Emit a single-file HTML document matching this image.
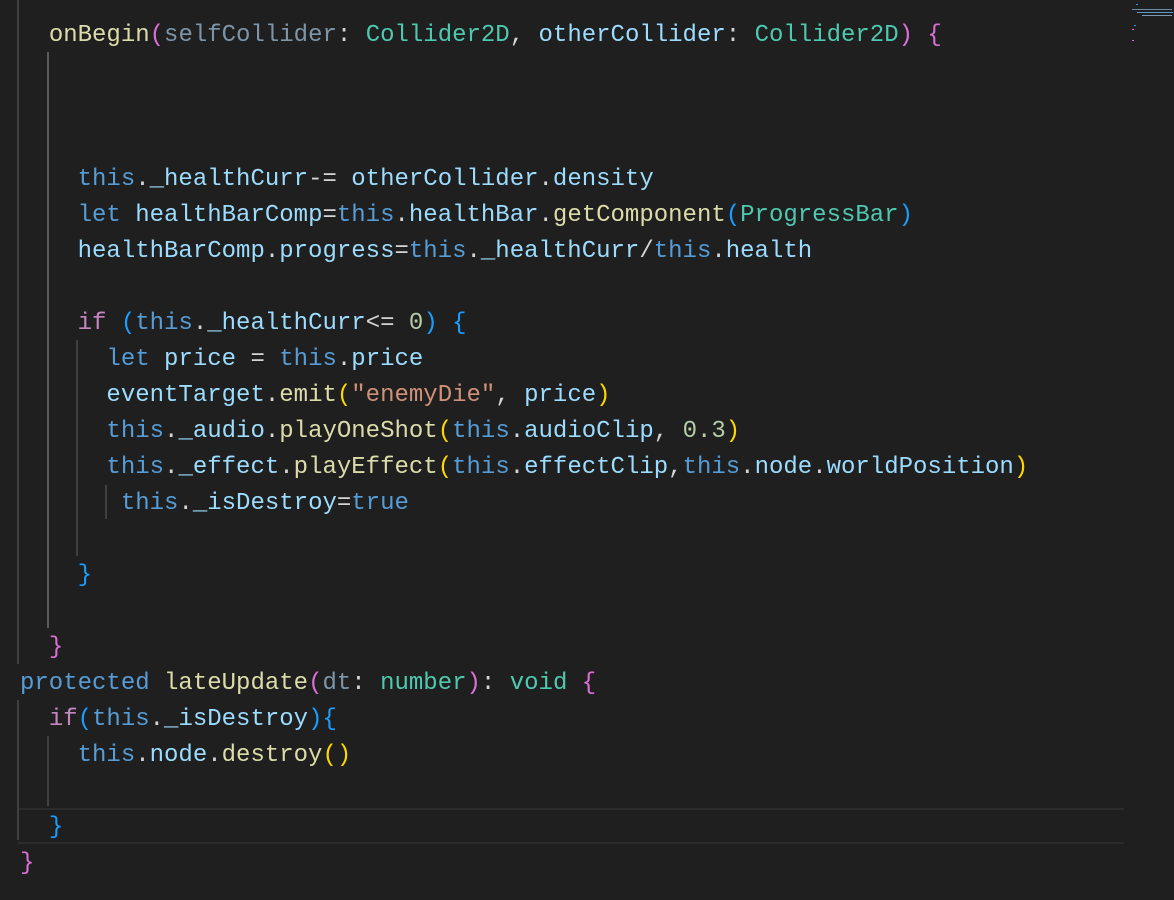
<!DOCTYPE html>
<html><head><meta charset="utf-8"><style>
html,body{margin:0;padding:0;background:#1f1f1f;width:1174px;height:900px;overflow:hidden}
.l{position:absolute;left:20px;height:36px;line-height:36px;font-family:"Liberation Mono","DejaVu Sans Mono",monospace;font-size:24px;white-space:pre;color:#d4d4d4;margin-top:2px}
.k{color:#569cd6}.c{color:#c586c0}.f{color:#dcdcaa}.v{color:#9cdcfe}.t{color:#4ec9b0}.s{color:#ce9178}.n{color:#b5cea8}
.p{color:#7d95a8}.bp{color:#da70d6}.bb{color:#179fff}.bg{color:#ffd700}
.g{position:absolute;width:2px;background:#404040}
.hl{position:absolute;left:18px;top:808px;width:1106px;height:32px;border-top:2px solid #2c2c2c;border-bottom:2px solid #2c2c2c}
.m{position:absolute;height:1px}
</style></head><body>
<div class="hl"></div>
<div class="g" style="left:17px;top:0;height:664px"></div>
<div class="g" style="left:17px;top:700px;height:140px"></div>
<div class="g" style="left:47px;top:52px;height:576px;background:#5a5a5a"></div>
<div class="g" style="left:76px;top:340px;height:216px"></div>
<div class="g" style="left:105px;top:485px;height:34px"></div>
<div class="g" style="left:47px;top:736px;height:70px"></div>

<div class="l" style="top:16px">  <span class="f">onBegin</span><span class="bp">(</span><span class="p">selfCollider</span>: <span class="t">Collider2D</span>, <span class="v">otherCollider</span>: <span class="t">Collider2D</span><span class="bp">)</span> <span class="bp">{</span></div>
<div class="l" style="top:160px">    <span class="k">this</span>.<span class="v">_healthCurr</span>-= <span class="v">otherCollider</span>.<span class="v">density</span></div>
<div class="l" style="top:196px">    <span class="k">let</span> <span class="v">healthBarComp</span>=<span class="k">this</span>.<span class="v">healthBar</span>.<span class="f">getComponent</span><span class="bb">(</span><span class="t">ProgressBar</span><span class="bb">)</span></div>
<div class="l" style="top:232px">    <span class="v">healthBarComp</span>.<span class="v">progress</span>=<span class="k">this</span>.<span class="v">_healthCurr</span>/<span class="k">this</span>.<span class="v">health</span></div>
<div class="l" style="top:304px">    <span class="c">if</span> <span class="bb">(</span><span class="k">this</span>.<span class="v">_healthCurr</span>&lt;= <span class="n">0</span><span class="bb">)</span> <span class="bb">{</span></div>
<div class="l" style="top:340px">      <span class="k">let</span> <span class="v">price</span> = <span class="k">this</span>.<span class="v">price</span></div>
<div class="l" style="top:376px">      <span class="v">eventTarget</span>.<span class="f">emit</span><span class="bg">(</span><span class="s">"enemyDie"</span>, <span class="v">price</span><span class="bg">)</span></div>
<div class="l" style="top:412px">      <span class="k">this</span>.<span class="v">_audio</span>.<span class="f">playOneShot</span><span class="bg">(</span><span class="k">this</span>.<span class="v">audioClip</span>, <span class="n">0.3</span><span class="bg">)</span></div>
<div class="l" style="top:448px">      <span class="k">this</span>.<span class="v">_effect</span>.<span class="f">playEffect</span><span class="bg">(</span><span class="k">this</span>.<span class="v">effectClip</span>,<span class="k">this</span>.<span class="v">node</span>.<span class="v">worldPosition</span><span class="bg">)</span></div>
<div class="l" style="top:484px">       <span class="k">this</span>.<span class="v">_isDestroy</span>=<span class="k">true</span></div>
<div class="l" style="top:556px">    <span class="bb">}</span></div>
<div class="l" style="top:628px">  <span class="bp">}</span></div>
<div class="l" style="top:664px"><span class="k">protected</span> <span class="f">lateUpdate</span><span class="bp">(</span><span class="p">dt</span>: <span class="t">number</span><span class="bp">)</span>: <span class="t">void</span> <span class="bp">{</span></div>
<div class="l" style="top:700px">  <span class="c">if</span><span class="bb">(</span><span class="k">this</span>.<span class="v">_isDestroy</span><span class="bb">){</span></div>
<div class="l" style="top:736px">    <span class="k">this</span>.<span class="v">node</span>.<span class="f">destroy</span><span class="bg">()</span></div>
<div class="l" style="top:808px">  <span class="bb">}</span></div>
<div class="l" style="top:844px"><span class="bp">}</span></div>

<div class="m" style="left:1136px;top:4px;width:2px;background:#179fff"></div>
<div class="m" style="left:1132px;top:9px;width:40px;background:#6a8aa8"></div>
<div class="m" style="left:1137px;top:12px;width:36px;background:#5a9ac8"></div>
<div class="m" style="left:1142px;top:15px;width:30px;background:#7a9ab8"></div>
<div class="m" style="left:1134px;top:25px;width:2px;background:#179fff"></div>
<div class="m" style="left:1132px;top:29px;width:2px;background:#da70d6"></div>
<div class="m" style="left:1132px;top:40px;width:2px;background:#da70d6"></div>
</body></html>
